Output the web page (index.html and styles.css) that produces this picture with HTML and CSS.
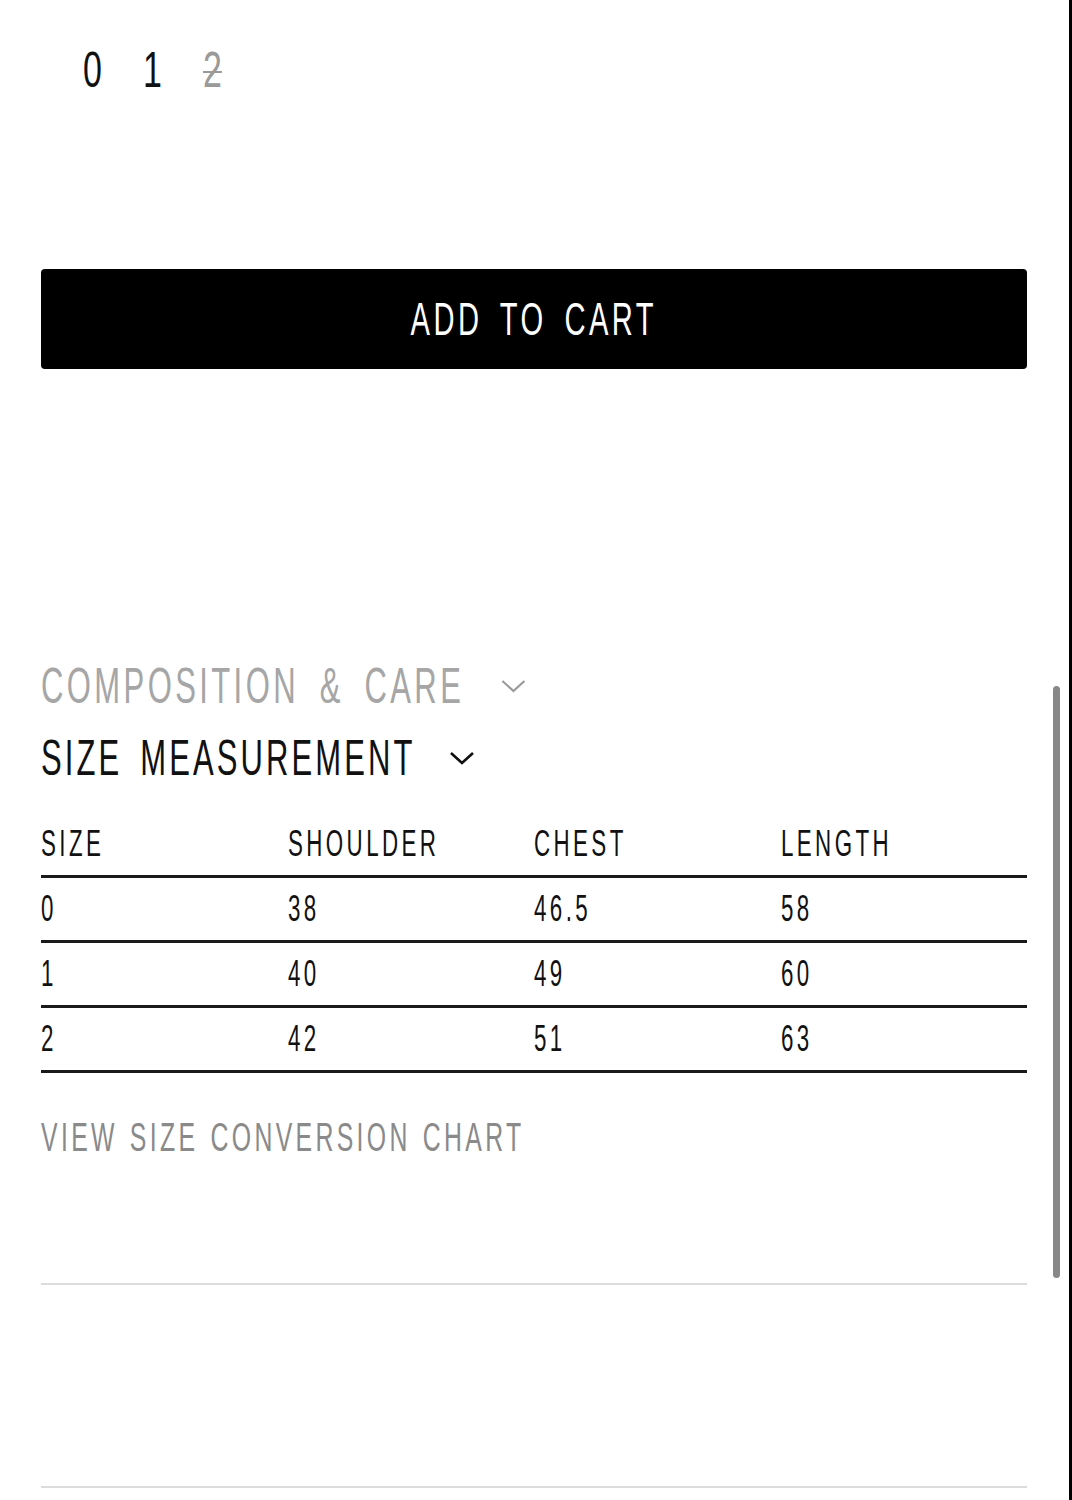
FILE: index.html
```html
<!DOCTYPE html>
<html>
<head>
<meta charset="utf-8">
<link rel="stylesheet" href="styles.css">
</head>
<body>
<div class="frame">
  <div class="content">
    <div class="sizes">
      <span class="size">0</span>
      <span class="size">1</span>
      <span class="size size-out">2</span>
    </div>
    <button class="cart"><span class="cart-label">ADD TO CART</span></button>
    <div class="accordion">
      <div class="acc-head acc-muted"><span>COMPOSITION &amp; CARE</span>
        <svg class="chev" viewBox="0 0 26 16" preserveAspectRatio="none"><polyline points="2,3 13,13 24,3"/></svg>
      </div>
      <div class="acc-head acc-open"><span>SIZE MEASUREMENT</span>
        <svg class="chev" viewBox="0 0 26 16" preserveAspectRatio="none"><polyline points="2,3 13,13 24,3"/></svg>
      </div>
    </div>
    <table class="measure">
      <thead>
        <tr><th><span class="t">SIZE</span></th><th><span class="t">SHOULDER</span></th><th><span class="t">CHEST</span></th><th><span class="t">LENGTH</span></th></tr>
      </thead>
      <tbody>
        <tr><td><span class="t">0</span></td><td><span class="t">38</span></td><td><span class="t">46.5</span></td><td><span class="t">58</span></td></tr>
        <tr><td><span class="t">1</span></td><td><span class="t">40</span></td><td><span class="t">49</span></td><td><span class="t">60</span></td></tr>
        <tr><td><span class="t">2</span></td><td><span class="t">42</span></td><td><span class="t">51</span></td><td><span class="t">63</span></td></tr>
      </tbody>
    </table>
    <div class="conversion"><span class="conv-label">VIEW SIZE CONVERSION CHART</span></div>
    <div class="rule rule-first"></div>
    <div class="spacer"></div>
    <div class="rule"></div>
  </div>
  <div class="scroll-thumb"></div>
</div>
</body>
</html>
```

FILE: styles.css
```css
html, body {
  margin: 0;
  padding: 0;
  background: #fff;
}
body {
  font-family: "Liberation Sans", Arial, sans-serif;
  color: #000;
}
.frame {
  position: relative;
  width: 1072px;
  min-height: 1500px;
  box-sizing: border-box;
  border-right: 3px solid #000;
}
.content {
  width: 986px;
  padding-left: 41px;
  padding-top: 45px;
}
.sizes {
  display: flex;
  gap: 32px;
  padding-left: 42px;
  height: 50px;
}
.size {
  display: inline-block;
  font-size: 50px;
  line-height: 50px;
  color: #111;
  transform: scaleX(0.68);
  transform-origin: 0 50%;
}
.size-out {
  color: #9a9a9a;
  text-decoration: line-through;
  text-decoration-thickness: 2px;
}
.cart {
  display: flex;
  align-items: center;
  justify-content: center;
  width: 986px;
  height: 100px;
  margin-top: 174px;
  background: #000;
  color: #fff;
  border: none;
  border-radius: 4px;
  font-family: inherit;
  padding: 0;
}
.cart-label {
  display: inline-block;
  font-size: 47px;
  line-height: 100px;
  letter-spacing: 5.6px;
  word-spacing: 10px;
  white-space: nowrap;
  transform: scaleX(0.62);
}
.accordion {
  margin-top: 281px;
}
.acc-head {
  display: flex;
  align-items: center;
  font-size: 50px;
  line-height: 72px;
  height: 72px;
  white-space: nowrap;
  transform: scaleX(0.62);
  transform-origin: 0 50%;
}
.acc-muted {
  color: #a6a6a6;
  letter-spacing: 5.5px;
  word-spacing: 14px;
}
.acc-open {
  color: #111;
  letter-spacing: 5px;
  word-spacing: 10px;
}
.chev {
  width: 42px;
  height: 16px;
  margin-left: 58px;
  fill: none;
  stroke: #111;
  stroke-width: 2.6;
}
.acc-muted .chev {
  stroke: #9a9a9a;
  stroke-width: 2.2;
}
.acc-open .chev {
  margin-left: 54px;
}
.measure {
  width: 986px;
  margin-top: 19px;
  border-collapse: collapse;
  table-layout: fixed;
}
.measure th, .measure td {
  text-align: left;
  font-weight: normal;
  font-size: 36px;
  line-height: 62px;
  height: 62px;
  padding: 0;
  color: #111;
  border-bottom: 3px solid #1a1a1a;
}
.t {
  display: inline-block;
  white-space: nowrap;
  letter-spacing: 5.5px;
  transform: scaleX(0.62);
  transform-origin: 0 50%;
}
.conversion {
  margin-top: 39px;
  font-size: 40px;
  line-height: 50px;
  height: 50px;
  color: #8a8a8a;
}
.conv-label {
  display: inline-block;
  white-space: nowrap;
  letter-spacing: 5.4px;
  word-spacing: 3px;
  transform: scaleX(0.62);
  transform-origin: 0 50%;
}
.rule {
  height: 2px;
  background: #dcdcdc;
}
.rule-first {
  margin-top: 121px;
}
.spacer {
  height: 201px;
}
.scroll-thumb {
  position: absolute;
  left: 1053px;
  top: 686px;
  width: 7px;
  height: 592px;
  border-radius: 4px;
  background: #888;
}
```
